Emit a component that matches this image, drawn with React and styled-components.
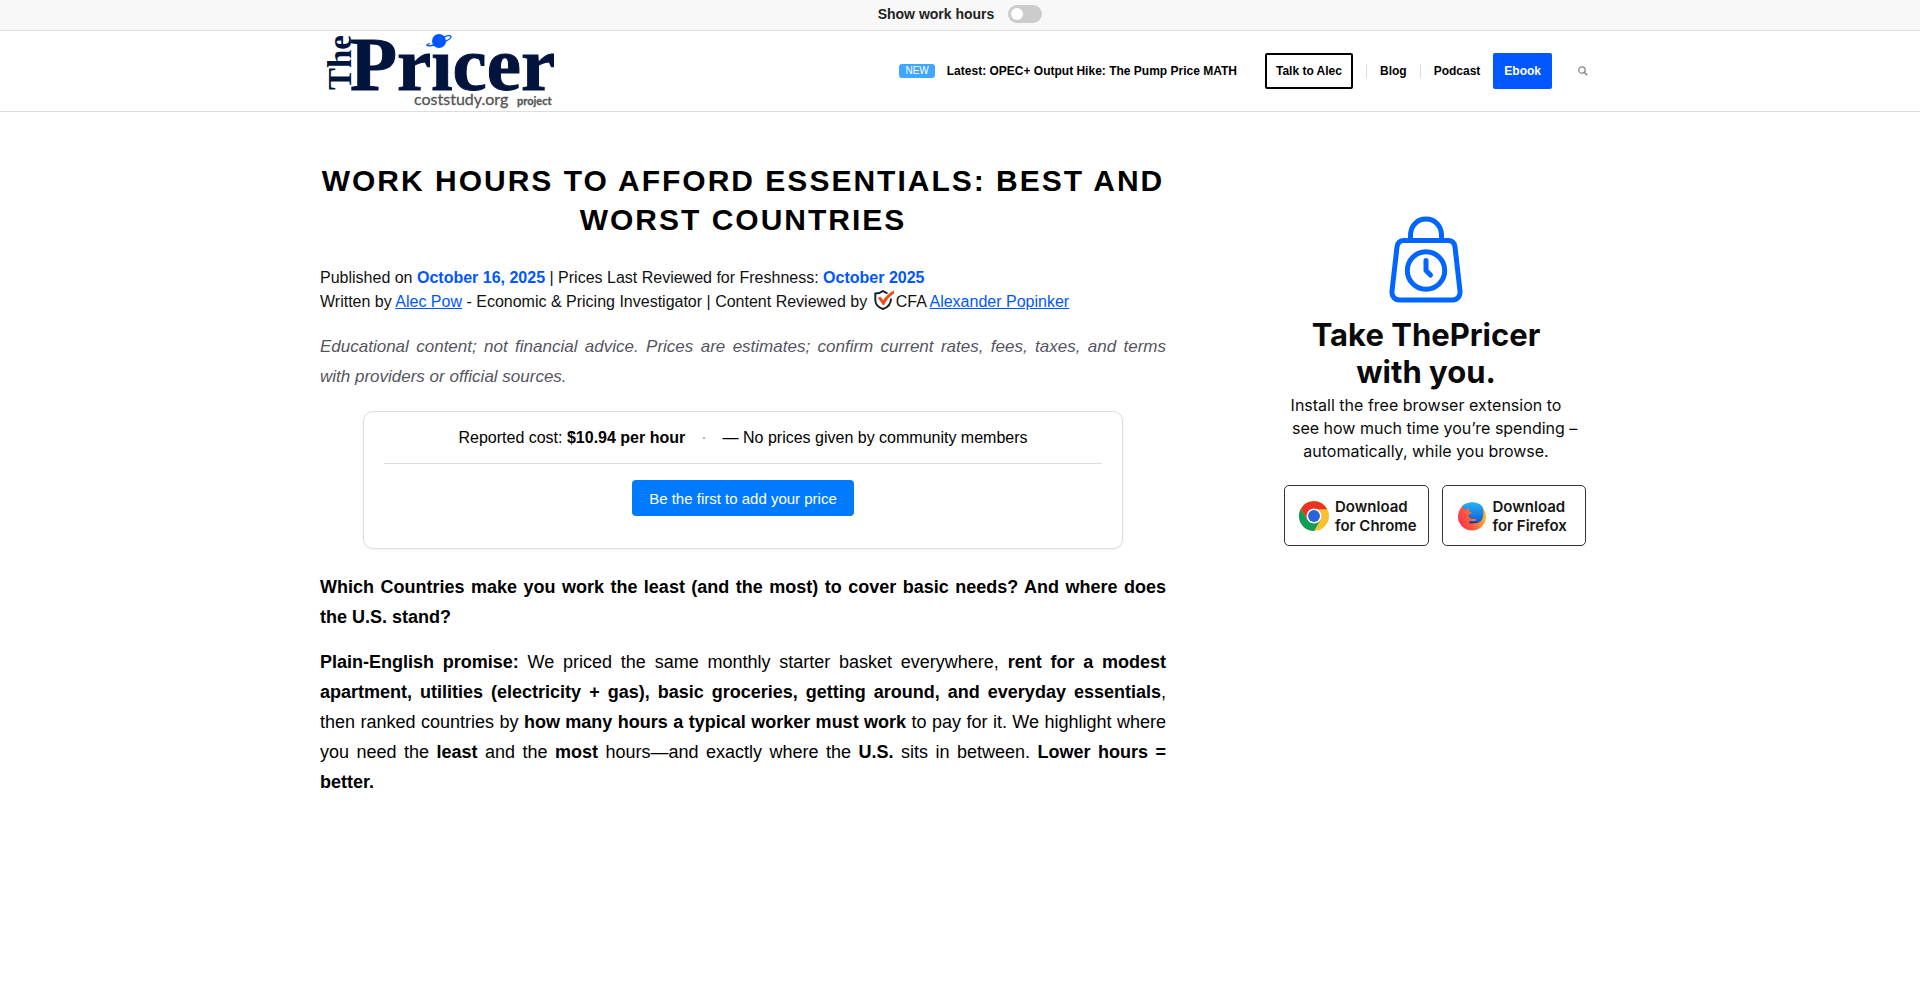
import React from "react";
import styled, { createGlobalStyle } from "styled-components";

const GlobalStyle = createGlobalStyle`
  * { box-sizing: border-box; }
  body {
    margin: 0;
    background: #fff;
    color: #000;
    font-family: "Liberation Sans", Arial, sans-serif;
    font-size: 16px;
  }
`;

const HoursBar = styled.div`
  display: flex;
  justify-content: center;
  align-items: center;
  gap: 14px;
  padding: 5px 0 7px;
  background: #f8f8f8;
  border-bottom: 1px solid #ddd;
`;

const HoursLabel = styled.label`
  font-size: 14px;
  line-height: 18px;
  font-weight: 700;
  color: #222;
`;

const Toggle = styled.input`
  appearance: none;
  width: 34px;
  height: 18px;
  margin: 0;
  padding: 3px;
  border-radius: 9px;
  background: #ccc;
  display: flex;
  cursor: pointer;

  &::before {
    content: "";
    width: 12px;
    height: 12px;
    border-radius: 50%;
    background: #fff;
  }

  &:checked {
    background: #0057ff;
    justify-content: flex-end;
  }
`;

const Container = styled.div`
  width: 100%;
  max-width: 1280px;
  margin: 0 auto;
`;

const Header = styled.header`
  border-bottom: 1px solid #ddd;
`;

const HeaderInner = styled(Container)`
  display: flex;
  align-items: center;
  justify-content: space-between;
  height: 80px;
  padding-right: 12px;
`;

const LogoLink = styled.a`
  display: block;

  svg {
    display: block;
    overflow: visible;
  }
`;

const Nav = styled.nav`
  display: flex;
  align-items: center;
  font-size: 12px;
  line-height: 14px;
  font-weight: 700;
`;

const NavLink = styled.a`
  color: #000;
  text-decoration: none;
  padding: 0 13px;
  border-left: 1px solid #ddd;
`;

const LatestLink = styled.a`
  display: flex;
  align-items: center;
  gap: 12px;
  margin-right: 28px;
  color: #000;
  text-decoration: none;
`;

const NewBadge = styled.span`
  padding: 0 6px;
  border-radius: 3px;
  background: #40a6ff;
  color: #fff;
  font-size: 10px;
  font-weight: 400;
`;

const NavButton = styled.a`
  display: flex;
  align-items: center;
  height: 36px;
  padding: 0 ${(p) => (p.$solid ? 11 : 9)}px;
  border: ${(p) => (p.$solid ? "0" : "2px solid #000")};
  border-radius: 2px;
  margin-right: ${(p) => (p.$solid ? 26 : 13)}px;
  background: ${(p) => (p.$solid ? "#0057ff" : "#fff")};
  color: ${(p) => (p.$solid ? "#fff" : "#000")};
  text-decoration: none;
`;

const SearchButton = styled.button`
  display: flex;
  padding: 0;
  border: 0;
  background: none;
  cursor: pointer;
`;

const Columns = styled(Container)`
  display: flex;
  justify-content: space-between;
  gap: 60px;
  padding-right: 14px;
`;

const Article = styled.main`
  flex: 0 1 846px;
  padding-top: 49px;
`;

const Title = styled.h1`
  margin: 0 0 27px;
  font-size: 30px;
  line-height: 39px;
  letter-spacing: 2px;
  text-align: center;
  text-transform: uppercase;
`;

const Meta = styled.div`
  margin-bottom: 18px;
  line-height: 24px;
  color: #111;

  strong,
  a {
    color: #0057ff;
  }

  svg {
    margin: 0 2px;
    vertical-align: -3px;
  }
`;

const Disclaimer = styled.p`
  margin: 0 0 19px;
  font-size: 17px;
  line-height: 30px;
  font-style: italic;
  text-align: justify;
  color: #555562;
`;

const PriceCard = styled.section`
  max-width: 760px;
  margin: 0 auto 23px;
  padding: 14px 20px 32px;
  border: 1px solid #ddd;
  border-radius: 10px;
  box-shadow: 0 1px 3px rgba(0, 0, 0, 0.06);
  text-align: center;
`;

const PriceSummary = styled.div`
  display: flex;
  justify-content: center;
  gap: 16px;
  margin-bottom: 16px;
  padding-bottom: 13px;
  border-bottom: 1px solid #ddd;
  line-height: 24px;
`;

const Dot = styled.span`
  color: #999;
`;

const AddPriceButton = styled.button`
  height: 36px;
  padding: 0 17px;
  border: 0;
  border-radius: 4px;
  background: #007bff;
  color: #fff;
  font-family: inherit;
  font-size: 15px;
  cursor: pointer;
`;

const Paragraph = styled.p`
  margin: 0 0 15px;
  font-size: 18px;
  line-height: 30px;
  text-align: justify;
`;

const Sidebar = styled.aside`
  flex: 0 0 302px;
  min-width: 0;
  padding-top: 104px;
  font-family: Inter, "Liberation Sans", sans-serif;
  text-align: center;
  color: #0a0a0a;
`;

const BagIcon = styled.svg`
  display: block;
  margin: 0 auto 12px;
`;

const PromoText = styled.div`
  padding-right: 18px;
`;

const PromoTitle = styled.h2`
  margin: 0 0 4px;
  font-size: 31px;
  line-height: 37px;
  font-weight: 700;
`;

const PromoCopy = styled.p`
  margin: 0 0 22px;
  font-size: 16px;
  line-height: 23px;
  white-space: nowrap;
`;

const Downloads = styled.div`
  display: grid;
  grid-template-columns: 1fr 1fr;
  gap: 13px;
`;

const DownloadLink = styled.a`
  display: flex;
  align-items: center;
  gap: 6px;
  height: 61px;
  padding-left: 14px;
  border: 1px solid #333;
  border-radius: 5px;
  color: #151515;
  font-size: 15px;
  line-height: 19px;
  font-weight: 600;
  text-align: left;
  text-decoration: none;
  white-space: nowrap;
`;

function Logo() {
  return (
    <svg width="240" height="80" viewBox="320 31 240 80" role="img" aria-label="The Pricer">
      <g fill="#00143d" fontFamily="Liberation Serif, serif" fontWeight="700">
        <text x="0" y="0" fontSize="33" transform="translate(351 90) rotate(-90)">The</text>
        <text x="350" y="90" fontSize="77" stroke="#00143d" strokeWidth="1">Prıcer</text>
      </g>
      <circle cx="439" cy="41" r="7" fill="#0057ff" />
      <path
        d="M430 43.500C425 45 426 46.500 432 45.500C441 44 452 39 451 36.500C450.500 35.500 448 35.500 444 37"
        fill="none" stroke="#0057ff" strokeWidth="1.300"
      />
      <g fill="#555" stroke="#555" strokeWidth="0.300" fontFamily="Lato, sans-serif">
        <text x="414" y="105" fontSize="16">coststudy.org</text>
        <text x="517" y="105" fontSize="11" fontWeight="700">project</text>
      </g>
    </svg>
  );
}

function SearchIcon() {
  return (
    <svg width="10" height="10" viewBox="0 0 10 10" fill="none" stroke="#888">
      <circle cx="4" cy="4" r="3.200" strokeWidth="1.300" />
      <path d="M6.300 6.300L9.200 9.200" strokeWidth="1.600" />
    </svg>
  );
}

function ShieldIcon() {
  return (
    <svg width="20" height="20" viewBox="0 0 20 20" fill="none" aria-hidden="true">
      <path
        d="M13.500 3.300C11.500 2.800 10.300 2 9 1C7 2.700 4.500 3.500 1.300 3.500V10C1.300 14.500 4.500 17.500 9 19C13.500 17.500 17 14.500 17 8.500"
        stroke="#16202c" strokeWidth="1.900"
      />
      <path d="M4 8L6.300 6.500L9.200 10C11.500 6.500 15 3 20 .5V3.500C16 6 12.500 10 10.200 15H8.800Z" fill="#e94e1b" />
    </svg>
  );
}

function Bag() {
  return (
    <BagIcon width="74" height="88" viewBox="0 0 74 88" fill="none" stroke="#0066ff" strokeWidth="5" aria-hidden="true">
      <path d="M21.500 24V19.500C21.500 10 28 3 37 3S52.500 10 52.500 19.500V24" />
      <path d="M15 24.500H59C63 24.500 65.500 27 66 31L71 75C71.500 80 68.500 84 63.500 84H10.500C5.500 84 2.500 80 3 75L8 31C8.500 27 11 24.500 15 24.500Z" />
      <circle cx="37" cy="54.500" r="18.700" />
      <path d="M37 44.500V54.500L41.500 59" strokeLinecap="round" strokeLinejoin="round" />
    </BagIcon>
  );
}

function ChromeIcon() {
  return (
    <svg width="30" height="30" viewBox="0 0 48 48" aria-hidden="true">
      <circle cx="24" cy="24" r="24" fill="#fbc02d" />
      <path d="M24 24L13.600 30L3.200 12A24 24 0 0 0 24 48L34.400 30Z" fill="#0f9d58" />
      <path d="M3.200 12A24 24 0 0 1 44.800 13H24L13.600 30Z" fill="#ea3323" />
      <circle cx="24" cy="24" r="12" fill="#fff" />
      <circle cx="24" cy="24" r="9.500" fill="#2962d9" />
    </svg>
  );
}

function FirefoxIcon() {
  return (
    <svg width="30" height="30" viewBox="0 0 30 30" aria-hidden="true">
      <defs>
        <linearGradient id="fox" x1="0" y1=".7" x2="1" y2=".3">
          <stop offset="0" stopColor="#ff2d50" />
          <stop offset=".5" stopColor="#ff6a39" />
          <stop offset="1" stopColor="#ffc72c" />
        </linearGradient>
        <linearGradient id="globe" x1="0" y1="0" x2="0" y2="1">
          <stop offset="0" stopColor="#21b5fb" />
          <stop offset="1" stopColor="#1557cf" />
        </linearGradient>
      </defs>
      <circle cx="15" cy="15.500" r="14" fill="url(#fox)" />
      <path
        d="M5 5C11 0 20 0 25 5C27 9 27 16 24 20C21 23 16 23 12 20L18 20C20 19 20 18 17 18C14 18 12 17 11 14L15 12L12 10V7L8 9Z"
        fill="url(#globe)"
      />
      <path d="M12 21C15 23 18 21 20 21" stroke="#193b72" strokeWidth="1.500" fill="none" />
    </svg>
  );
}

export default function App() {
  return (
    <>
      <GlobalStyle />
      <HoursBar>
        <HoursLabel htmlFor="work-hours">Show work hours</HoursLabel>
        <Toggle id="work-hours" type="checkbox" role="switch" />
      </HoursBar>

      <Header>
        <HeaderInner>
          <LogoLink href="#home"><Logo /></LogoLink>
          <Nav>
            <LatestLink href="#latest">
              <NewBadge>NEW</NewBadge>
              Latest: OPEC+ Output Hike: The Pump Price MATH
            </LatestLink>
            <NavButton href="#talk">Talk to Alec</NavButton>
            <NavLink href="#blog">Blog</NavLink>
            <NavLink href="#podcast">Podcast</NavLink>
            <NavButton $solid href="#ebook">Ebook</NavButton>
            <SearchButton type="button" aria-label="Search"><SearchIcon /></SearchButton>
          </Nav>
        </HeaderInner>
      </Header>

      <Columns>
        <Article>
          <Title>Work Hours to Afford Essentials: Best and Worst Countries</Title>
          <Meta>
            Published on <strong>October 16, 2025</strong> | Prices Last Reviewed for Freshness:{" "}
            <strong>October 2025</strong>
            <br />
            Written by <a href="#alec">Alec Pow</a> - Economic &amp; Pricing Investigator | Content Reviewed by{" "}
            <ShieldIcon />CFA <a href="#alexander">Alexander Popinker</a>
          </Meta>
          <Disclaimer>
            Educational content; not financial advice. Prices are estimates; confirm current rates, fees, taxes,
            and terms with&nbsp;providers or official sources.
          </Disclaimer>
          <PriceCard>
            <PriceSummary>
              <span>Reported cost: <strong>$10.94 per hour</strong></span>
              <Dot>·</Dot>
              <span>— No prices given by community members</span>
            </PriceSummary>
            <AddPriceButton type="button">Be the first to add your price</AddPriceButton>
          </PriceCard>
          <Paragraph>
            <strong>
              Which Countries make you work the least (and the most) to cover basic needs? And where does the U.S.
              stand?
            </strong>
          </Paragraph>
          <Paragraph>
            <strong>Plain-English promise:</strong> We priced the same monthly starter basket everywhere,{" "}
            <strong>
              rent for a modest apartment, utilities (electricity + gas), basic groceries, getting around, and
              everyday essentials
            </strong>
            , then ranked countries by <strong>how many hours a typical worker must work</strong> to pay for it. We
            highlight where you need the <strong>least</strong> and the <strong>most</strong> hours—and exactly
            where the <strong>U.S.</strong> sits in between. <strong>Lower hours = better.</strong>
          </Paragraph>
        </Article>

        <Sidebar>
          <PromoText>
            <Bag />
            <PromoTitle>
              Take ThePricer
              <br />
              with you.
            </PromoTitle>
            <PromoCopy>
              Install the free browser extension to
              <br />
              &ensp;see how much time you’re spending –
              <br />
              automatically, while you browse.
            </PromoCopy>
          </PromoText>
          <Downloads>
            <DownloadLink href="#chrome">
              <ChromeIcon />
              <span>Download<br />for Chrome</span>
            </DownloadLink>
            <DownloadLink href="#firefox">
              <FirefoxIcon />
              <span>Download<br />for Firefox</span>
            </DownloadLink>
          </Downloads>
        </Sidebar>
      </Columns>
    </>
  );
}
